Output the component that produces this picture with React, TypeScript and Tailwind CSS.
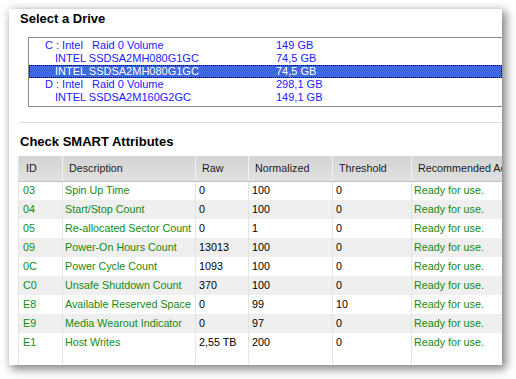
import React from 'react';

type Drive = { label: string; size: string; indent: boolean; selected?: boolean };

const drives: Drive[] = [
  { label: 'C : Intel   Raid 0 Volume', size: '149 GB', indent: false },
  { label: 'INTEL SSDSA2MH080G1GC', size: '74,5 GB', indent: true },
  { label: 'INTEL SSDSA2MH080G1GC', size: '74,5 GB', indent: true, selected: true },
  { label: 'D : Intel   Raid 0 Volume', size: '298,1 GB', indent: false },
  { label: 'INTEL SSDSA2M160G2GC', size: '149,1 GB', indent: true },
];

type Attr = { id: string; desc: string; raw: string; norm: string; thresh: string };

const attrs: Attr[] = [
  { id: '03', desc: 'Spin Up Time', raw: '0', norm: '100', thresh: '0' },
  { id: '04', desc: 'Start/Stop Count', raw: '0', norm: '100', thresh: '0' },
  { id: '05', desc: 'Re-allocated Sector Count', raw: '0', norm: '1', thresh: '0' },
  { id: '09', desc: 'Power-On Hours Count', raw: '13013', norm: '100', thresh: '0' },
  { id: '0C', desc: 'Power Cycle Count', raw: '1093', norm: '100', thresh: '0' },
  { id: 'C0', desc: 'Unsafe Shutdown Count', raw: '370', norm: '100', thresh: '0' },
  { id: 'E8', desc: 'Available Reserved Space', raw: '0', norm: '99', thresh: '10' },
  { id: 'E9', desc: 'Media Wearout Indicator', raw: '0', norm: '97', thresh: '0' },
  { id: 'E1', desc: 'Host Writes', raw: '2,55 TB', norm: '200', thresh: '0' },
];

const headers = ['ID', 'Description', 'Raw', 'Normalized', 'Threshold', 'Recommended Ac'];

export default function App() {
  return (
    <div className="w-[516px] h-[379px] bg-white pt-[9px] pl-[9px] overflow-hidden font-['Liberation_Sans',Arial,sans-serif]">
      <div className="w-[493px] h-[356px] bg-white flex flex-col overflow-hidden shadow-[3px_3px_9px_1px_rgba(0,0,0,0.5)]">
        <h2 className="mt-[2px] ml-[11px] h-[16px] leading-[16px] text-[13px] font-bold text-black">Select a Drive</h2>

        {/* drive list */}
        <div className="mt-[10px] ml-[19px] h-[70px] border border-r-0 border-[#8c8c8c] pt-[1px] shrink-0">
          {drives.map((d, i) => (
            <div
              key={i}
              className={`flex h-[13px] items-center text-[11px] leading-[13px] whitespace-pre ${
                d.selected ? 'bg-[#3d68de] text-white outline outline-1 outline-dotted outline-black -outline-offset-1' : 'text-[#1a1aff]'
              }`}
            >
              <span className={`w-[247px] shrink-0 ${d.indent ? 'pl-[26px]' : 'pl-[16px]'}`}>{d.label}</span>
              <span>{d.size}</span>
            </div>
          ))}
        </div>

        <div className="mt-[15px] ml-[11px] h-px bg-[#dedede] shrink-0" />

        <h2 className="mt-[11px] ml-[11px] h-[16px] leading-[16px] text-[13px] font-bold text-black">Check SMART Attributes</h2>

        {/* attributes table */}
        <div className="mt-[6px] ml-[9px] flex-1 overflow-hidden">
          <table className="table-fixed border-collapse w-[484px] text-[10.75px] leading-[13px]">
            <colgroup>
              <col className="w-[44px]" />
              <col className="w-[133px]" />
              <col className="w-[53px]" />
              <col className="w-[84px]" />
              <col className="w-[79px]" />
              <col className="w-[91px]" />
            </colgroup>
            <thead>
              <tr className="h-[25px] bg-gradient-to-b from-[#d3d3d3] to-[#e1e1e1]">
                {headers.map((h, i) => (
                  <th
                    key={h}
                    className={`p-0 pl-[6px] text-left font-normal text-[#1c1c1c] whitespace-nowrap overflow-hidden border-b border-[#c2c2c2] ${
                      i === 0 ? 'pl-[7px] border-l border-l-[#e2e2e2]' : ''
                    } ${i === 5 ? 'pl-[5px]' : 'border-r border-r-[#f2f2f2]'}`}
                  >
                    {h}
                  </th>
                ))}
              </tr>
            </thead>
            <tbody>
              {attrs.map((a, i) => (
                <tr key={a.id} className={`h-[19px] ${i % 2 === 1 ? 'bg-[#efefef]' : 'bg-white'}`}>
                  <td className="p-0 pl-[4px] text-[#138a13] border-l border-r border-[#e4e4e4]">{a.id}</td>
                  <td className="p-0 pl-[2px] text-[#138a13] border-r border-[#e4e4e4] whitespace-nowrap">{a.desc}</td>
                  <td className="p-0 pl-[3px] text-black border-r border-[#e4e4e4] whitespace-nowrap">{a.raw}</td>
                  <td className="p-0 pl-[3px] text-black border-r border-[#e4e4e4]">{a.norm}</td>
                  <td className="p-0 pl-[3px] text-black border-r border-[#e4e4e4]">{a.thresh}</td>
                  <td className="p-0 pl-[2px] text-[#138a13] whitespace-nowrap">Ready for use.</td>
                </tr>
              ))}
              <tr className="h-[20px] bg-white">
                <td className="border-l border-r border-[#e4e4e4]" />
                <td className="border-r border-[#e4e4e4]" />
                <td className="border-r border-[#e4e4e4]" />
                <td className="border-r border-[#e4e4e4]" />
                <td className="border-r border-[#e4e4e4]" />
                <td />
              </tr>
            </tbody>
          </table>
        </div>
      </div>
    </div>
  );
}
